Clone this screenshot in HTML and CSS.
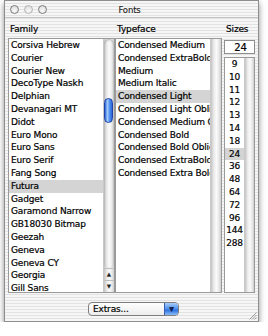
FILE: index.html
```html
<!DOCTYPE html>
<html lang="en">
<head>
    <meta charset="UTF-8">
    <meta name="viewport" content="width=device-width, initial-scale=1.0">
    <title>Fonts</title>
    <link rel="stylesheet" href="styles.css">
</head>
<body>
    <div class="window">
        <div class="titlebar">
            <div class="lights">
                <span class="light"></span>
                <span class="light light-dim"></span>
                <span class="light"></span>
            </div>
            <div class="title">Fonts</div>
            <div></div>
        </div>

        <div class="panel">
            <div class="browser">
                <!-- Family column -->
                <div class="column">
                    <div class="label">Family</div>
                    <div class="scroll-view tall">
                        <ul class="list">
                            <li>Corsiva Hebrew</li>
                            <li>Courier</li>
                            <li>Courier New</li>
                            <li>DecoType Naskh</li>
                            <li>Delphian</li>
                            <li>Devanagari MT</li>
                            <li>Didot</li>
                            <li>Euro Mono</li>
                            <li>Euro Sans</li>
                            <li>Euro Serif</li>
                            <li>Fang Song</li>
                            <li class="selected">Futura</li>
                            <li>Gadget</li>
                            <li>Garamond Narrow</li>
                            <li>GB18030 Bitmap</li>
                            <li>Geezah</li>
                            <li>Geneva</li>
                            <li>Geneva CY</li>
                            <li>Georgia</li>
                            <li>Gill Sans</li>
                        </ul>
                        <div class="scrollbar">
                            <div class="track">
                                <div class="thumb"></div>
                            </div>
                            <div class="arrow">&#9650;</div>
                            <div class="arrow">&#9660;</div>
                        </div>
                    </div>
                </div>

                <!-- Typeface column -->
                <div class="column">
                    <div class="label">Typeface</div>
                    <div class="scroll-view tall">
                        <ul class="list">
                            <li>Condensed Medium</li>
                            <li>Condensed ExtraBold</li>
                            <li>Medium</li>
                            <li>Medium Italic</li>
                            <li class="selected">Condensed Light</li>
                            <li>Condensed Light Oblique</li>
                            <li>Condensed Medium Oblique</li>
                            <li>Condensed Bold</li>
                            <li>Condensed Bold Oblique</li>
                            <li>Condensed ExtraBold Oblique</li>
                            <li>Condensed Extra Bold</li>
                        </ul>
                        <div class="scrollbar">
                            <div class="track idle"></div>
                        </div>
                    </div>
                </div>

                <!-- Sizes column -->
                <div class="column">
                    <div class="label">Sizes</div>
                    <div class="size-field">24</div>
                    <div class="scroll-view sizes">
                        <ul class="list centered">
                            <li>9</li>
                            <li>10</li>
                            <li>11</li>
                            <li>12</li>
                            <li>13</li>
                            <li>14</li>
                            <li>18</li>
                            <li class="selected">24</li>
                            <li>36</li>
                            <li>48</li>
                            <li>64</li>
                            <li>72</li>
                            <li>96</li>
                            <li>144</li>
                            <li>288</li>
                        </ul>
                        <div class="scrollbar narrow">
                            <div class="track idle"></div>
                        </div>
                    </div>
                </div>
            </div>

            <div class="footer">
                <div class="popup">
                    <span class="popup-text">Extras...</span>
                    <span class="popup-arrow">&#9660;</span>
                </div>
                <div class="grip">
                    <svg width="8" height="8" viewBox="0 0 8 8">
                        <path d="M7.5 0.5 L0.5 7.5 M7.5 3 L3 7.5 M7.5 5.5 L5.5 7.5" stroke="#8a8a8a" stroke-width="0.8" fill="none"/>
                    </svg>
                </div>
            </div>
        </div>
    </div>
</body>
</html>
```

FILE: styles.css
```css
body {
    margin: 0;
    background: #fff;
    font-family: "DejaVu Sans", "Liberation Sans", sans-serif;
    font-size: 9px;
    letter-spacing: -0.15px;
    color: #000;
    -webkit-text-stroke: 0.2px #000;
}
.window {
    margin-left: 4px;
    width: 255px;
    height: 322px;
    box-sizing: border-box;
    border: 1px solid #8e8e8e;
    box-shadow: 0 3px 6px rgba(0, 0, 0, .45);
    background: repeating-linear-gradient(to bottom, #f6f6f6 0, #f6f6f6 2px, #e2e2e2 2px, #e2e2e2 3px);
    display: flex;
    flex-direction: column;
}
.titlebar {
    height: 16px;
    border-bottom: 1px solid #c4c4c4;
    display: grid;
    grid-template-columns: 1fr auto 1fr;
    align-items: center;
}
.lights {
    display: flex;
    gap: 5px;
    padding-left: 5px;
    padding-top: 1px;
}
.light {
    width: 7px;
    height: 7px;
    border-radius: 50%;
    border: 1px solid #7c7c7c;
    background: radial-gradient(circle at 50% 70%, #fafafa, #d6d6d6);
}
.light-dim {
    border-color: #b4b4b4;
}
.title {
    color: #222;
    font-size: 8.5px;
    padding-top: 1px;
    padding-right: 4px;
    -webkit-text-stroke: 0.1px #222;
}
.panel {
    flex: 1;
    display: flex;
    flex-direction: column;
}
.browser {
    display: grid;
    grid-template-columns: 107px 107px 33px;
    padding-left: 3px;
}
.column:last-child {
    margin-left: 2px;
}
.label {
    height: 20px;
    line-height: 22px;
    padding-left: 2px;
}
.scroll-view {
    box-sizing: border-box;
    border: 1px solid #9a9a9a;
    display: flex;
    background: #fff;
}
.scroll-view.tall {
    height: 255px;
}
.scroll-view.sizes {
    height: 236px;
    margin-top: 3px;
}
.list {
    flex: 1;
    min-width: 0;
    margin: 0;
    padding: 0;
    list-style: none;
    overflow: hidden;
}
.list li {
    height: 12.8px;
    line-height: 12.8px;
    padding-left: 2px;
    white-space: nowrap;
    overflow: hidden;
}
.list li.selected {
    background: #d4d4d4;
}
.list.centered li {
    padding-left: 0;
    text-align: center;
}
.scrollbar {
    width: 11px;
    display: flex;
    flex-direction: column;
    border-left: 1px solid #c9c9c9;
    box-sizing: border-box;
    background: linear-gradient(to right, #c4c4c4, #ececec 30%, #fafafa 55%, #e8e8e8 80%, #cdcdcd);
}
.scrollbar.narrow {
    width: 10px;
}
.track {
    flex: 1;
    border-radius: 5px;
    box-shadow: inset 0 1px 2px rgba(0, 0, 0, .25);
}
.track.idle {
    border-radius: 0;
    box-shadow: none;
}
.thumb {
    margin-top: 59px;
    margin-left: 0;
    width: 9px;
    height: 25px;
    box-sizing: border-box;
    border-radius: 5px;
    border: 1px solid #1f44a8;
    background: linear-gradient(to right, #2d62d6, #a4ccfc 35%, #5a9af2 60%, #2a63da);
}
.arrow {
    height: 12px;
    border-top: 1px solid #bdbdbd;
    box-sizing: border-box;
    font-size: 5px;
    line-height: 11px;
    text-align: center;
    color: #222;
    letter-spacing: 0;
}
.size-field {
    margin-top: 2px;
    height: 14px;
    box-sizing: border-box;
    border: 1px solid #8e8e8e;
    background: #fff;
    text-align: center;
    line-height: 13px;
    font-size: 10px;
    padding-left: 2px;
}
.footer {
    flex: 1;
    display: flex;
    padding-left: 83px;
}
.popup {
    margin-top: 9px;
    width: 91px;
    height: 14px;
    box-sizing: border-box;
    border: 1px solid #7e7e7e;
    border-radius: 4px;
    background: linear-gradient(to bottom, #fff, #ececec);
    display: flex;
    overflow: hidden;
}
.popup-text {
    flex: 1;
    padding-left: 4px;
    line-height: 12px;
}
.popup-arrow {
    width: 13px;
    border-left: 1px solid #3a5fb0;
    background: linear-gradient(to bottom, #a9cdfa, #4d8fee 50%, #2f72e0 60%, #8bbcf7);
    color: #102050;
    font-size: 6px;
    line-height: 12px;
    text-align: center;
    letter-spacing: 0;
}
.grip {
    margin-left: auto;
    align-self: flex-end;
    width: 8px;
    height: 8px;
    margin-right: 1px;
    margin-bottom: 1px;
}
.grip svg {
    display: block;
}
```
